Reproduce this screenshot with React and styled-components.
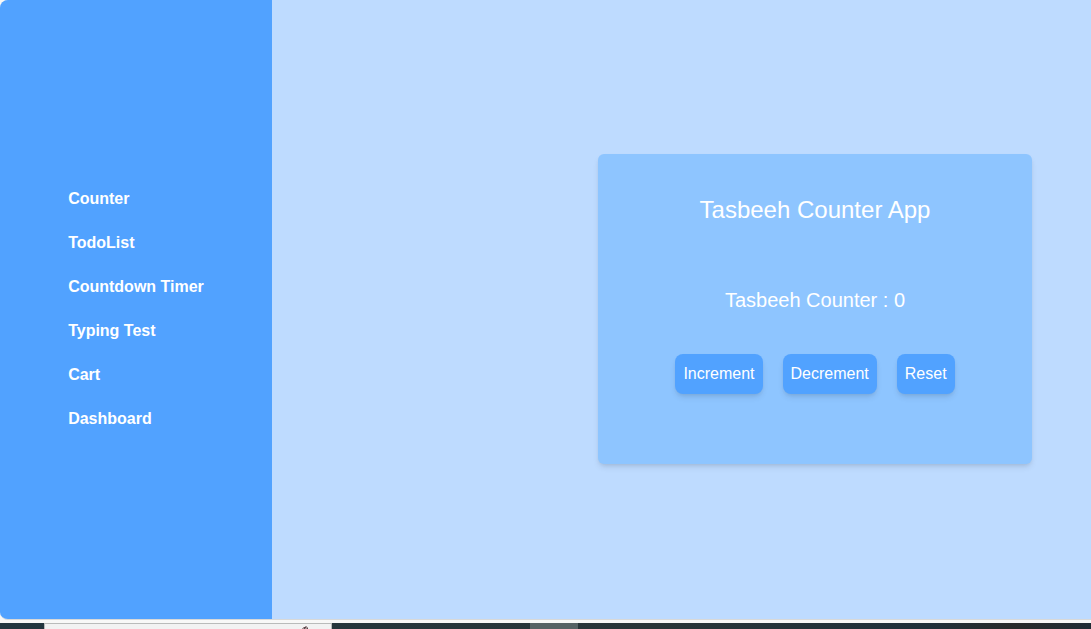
import React, { useState } from 'react';
import styled, { createGlobalStyle } from 'styled-components';

const GlobalStyle = createGlobalStyle`
  *, *::before, *::after { box-sizing: border-box; }
  body {
    margin: 0;
    background: #f8f8f7;
    font-family: "Liberation Sans", Arial, sans-serif;
    font-size: 16px;
    line-height: 24px;
  }
  button { font: inherit; }
`;

const Desktop = styled.div`
  display: flex;
  flex-direction: column;
  gap: 3px;
  min-height: 100vh;
`;

const AppWindow = styled.div`
  flex: 1;
  display: flex;
  border-bottom: 1px solid #d9d9d9;
  border-radius: 8px 0 0 8px;
  overflow: hidden;
  background: #bedbff;
`;

const Sidebar = styled.nav`
  flex: 0 0 25%;
  max-width: 272px;
  display: flex;
  align-items: center;
  justify-content: center;
  padding-bottom: 1px;
  background: #51a2ff;
`;

const NavList = styled.ul`
  display: flex;
  flex-direction: column;
  gap: 20px;
  margin: 0;
  padding: 0;
  list-style: none;
`;

const NavLink = styled.a`
  display: block;
  color: #fff;
  font-weight: 700;
  text-decoration: none;
`;

const Main = styled.main`
  flex: 1;
  display: flex;
  align-items: center;
  justify-content: flex-end;
  padding: 0 59px 1px 20px;
`;

const Card = styled.section`
  display: flex;
  flex-direction: column;
  align-items: center;
  width: 100%;
  max-width: 434px;
  padding: 40px 20px 70px;
  border-radius: 6px;
  color: #fff;
  background: #8ec5ff;
  box-shadow: 0 4px 6px -1px rgba(0, 0, 0, 0.1), 0 2px 4px -2px rgba(0, 0, 0, 0.1);
`;

const Title = styled.h1`
  margin: 0 0 60px;
  font-size: 24px;
  line-height: 32px;
  font-weight: 400;
`;

const Count = styled.p`
  margin: 0 0 40px;
  font-size: 20px;
  line-height: 28px;
`;

const Actions = styled.div`
  display: flex;
  gap: 20px;
`;

const ActionButton = styled.button`
  padding: 8px;
  border: 0;
  border-radius: 8px;
  color: #fff;
  background: #51a2ff;
  box-shadow: 0 4px 6px -1px rgba(0, 0, 0, 0.1), 0 2px 4px -2px rgba(0, 0, 0, 0.1);
  cursor: pointer;
`;

const Taskbar = styled.footer`
  display: flex;
  height: 6px;
  overflow: hidden;
  background: linear-gradient(90deg, #22363f, #293538 60%, #20303a 85%, #292b2b 93%, #202c35);
`;

const StartArea = styled.div`
  flex: 0 0 44px;
`;

const SearchStrip = styled.div`
  flex: 0 0 288px;
  display: flex;
  justify-content: flex-end;
  padding: 2px 22px 0 0;
  border: 1px solid #b9bbba;
  border-bottom: 0;
  background: #f2f2f2;
`;

const ActiveTask = styled.div`
  flex: 0 0 48px;
  margin-left: 198px;
  background: #566264;
`;

const pages = ['Counter', 'TodoList', 'Countdown Timer', 'Typing Test', 'Cart', 'Dashboard'];

export default function App() {
  const [count, setCount] = useState(0);
  return (
    <>
      <GlobalStyle />
      <Desktop>
        <AppWindow>
          <Sidebar aria-label="Pages">
            <NavList>
              {pages.map((page) => (
                <li key={page}>
                  <NavLink href={`#${page.toLowerCase().replace(' ', '-')}`}>{page}</NavLink>
                </li>
              ))}
            </NavList>
          </Sidebar>
          <Main>
            <Card>
              <Title>Tasbeeh Counter App</Title>
              <Count>Tasbeeh Counter : {count}</Count>
              <Actions>
                <ActionButton type="button" onClick={() => setCount(count + 1)}>Increment</ActionButton>
                <ActionButton type="button" onClick={() => setCount(Math.max(0, count - 1))}>Decrement</ActionButton>
                <ActionButton type="button" onClick={() => setCount(0)}>Reset</ActionButton>
              </Actions>
            </Card>
          </Main>
        </AppWindow>
        <Taskbar>
          <StartArea />
          <SearchStrip>
            <svg width="7" height="4" viewBox="0 0 7 4" aria-hidden="true">
              <path d="M0 4V2H1V1H3V0H5V1H6V4Z" fill="#a39696" />
              <path d="M2 3V1H4V2H3V3ZM5 4V2H6V4Z" fill="#5d464b" />
            </svg>
          </SearchStrip>
          <ActiveTask />
        </Taskbar>
      </Desktop>
    </>
  );
}
